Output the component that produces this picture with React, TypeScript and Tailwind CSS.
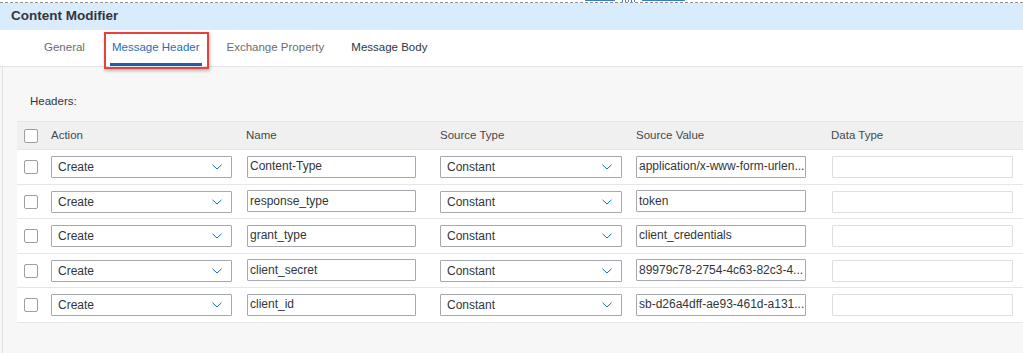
import React from "react";

const rows = [
  { name: "Content-Type", value: "application/x-www-form-urlen..." },
  { name: "response_type", value: "token" },
  { name: "grant_type", value: "client_credentials" },
  { name: "client_secret", value: "89979c78-2754-4c63-82c3-4..." },
  { name: "client_id", value: "sb-d26a4dff-ae93-461d-a131..." },
];

function Chevron() {
  return (
    <svg width="10" height="6" viewBox="0 0 10 6" className="shrink-0">
      <path d="M0.5 0.8 L5 5 L9.5 0.8" fill="none" stroke="#0a6ed1" strokeWidth="1" />
    </svg>
  );
}

function Checkbox() {
  return <div className="w-[14px] h-[14px] bg-white border border-[#9aa0a6] rounded-[2px]" />;
}

function Select({ text, w }: { text: string; w: string }) {
  return (
    <div className={`${w} h-[22px] bg-white border border-[#a3a9af] rounded-[1px] flex items-center justify-between pl-[6px] pr-[9px]`}>
      <span className="text-[12px] text-[#32363a] leading-none">{text}</span>
      <Chevron />
    </div>
  );
}

function Input({ text, w, light }: { text?: string; w: string; light?: boolean }) {
  return (
    <div
      className={`${w} h-[22px] bg-white border ${light ? "border-[#dcdfe2]" : "border-[#a3a9af]"} rounded-[1px] flex items-center pl-[2px] overflow-hidden`}
    >
      <span className="text-[12px] text-[#32363a] leading-none whitespace-nowrap -mt-[1px]">{text}</span>
    </div>
  );
}

export default function App() {
  return (
    <div
      className="w-[1023px] h-[353px] bg-[#f7f7f7] overflow-hidden relative flex flex-col"
      style={{ fontFamily: '"Liberation Sans", Arial, sans-serif' }}
    >
      {/* top strip with dashed line */}
      <div className="h-[3px] bg-white border-b border-dashed border-[#8f8f8f] relative shrink-0">
        <div className="absolute left-[585px] top-0 w-[30px] h-[1px] bg-[#3d7cc0]" />
        <div className="absolute left-[622px] top-0 w-[13px] h-[2px] flex gap-[2px]">
          <div className="w-[1px] h-full bg-[#3d7cc0]" />
          <div className="w-[1px] h-full bg-[#3d7cc0]" />
          <div className="w-[1px] h-full bg-[#3d7cc0]" />
          <div className="w-[1px] h-full bg-[#3d7cc0]" />
          <div className="w-[1px] h-full bg-[#3d7cc0]" />
        </div>
        <div className="absolute left-[642px] top-0 w-[43px] h-[1px] bg-[#3d7cc0]" />
      </div>

      {/* title bar */}
      <div className="h-[27px] bg-[#d9ecfd] flex items-center pl-[11px] shrink-0">
        <span className="text-[13.5px] font-bold text-[#32363a]">Content Modifier</span>
      </div>

      {/* tabs */}
      <div className="h-[37px] bg-white border-b border-[#e3e3e3] flex pl-[42px] gap-[23px] shrink-0 relative">
        <div className="px-[2px] flex items-center border-b-[3px] border-transparent pt-[3px] text-[11.5px] text-[#6a6d70]">General</div>
        <div className="px-[2px] flex items-center border-b-[3px] border-[#1d5fae] pt-[3px] text-[11.5px] text-[#2a6cb3]">Message Header</div>
        <div className="px-[2px] flex items-center border-b-[3px] border-transparent pt-[3px] text-[11.5px] text-[#6a6d70]">Exchange Property</div>
        <div className="px-[2px] flex items-center border-b-[3px] border-transparent pt-[3px] text-[11.5px] text-[#32363a]">Message Body</div>
        {/* red annotation box */}
        <div className="absolute left-[104px] top-[2px] w-[105px] h-[37px] border-2 border-[#e8403b] shadow-[1px_2px_3px_rgba(0,0,0,0.25)]" />
      </div>

      {/* content */}
      <div className="flex-1 ml-[2px] border-l border-[#e2e2e2] flex flex-col">
        <div className="pl-[27px] pt-[27px] h-[54px] text-[11.5px] text-[#32363a] leading-[14px]">Headers:</div>

        <div className="ml-[14px]">
          {/* header row */}
          <div className="h-[29px] bg-[#f0f0f0] border-t border-[#e6e6e6] border-b flex items-center text-[11.5px] text-[#45484b]">
            <div className="w-[27px] pl-[7px] flex items-center">
              <Checkbox />
            </div>
            <div className="w-[195px] pl-[7px]">Action</div>
            <div className="w-[195px] pl-[7px]">Name</div>
            <div className="w-[195px] pl-[6px]">Source Type</div>
            <div className="w-[195px] pl-[7px]">Source Value</div>
            <div className="pl-[7px]">Data Type</div>
          </div>

          {rows.map((r, i) => (
            <div
              key={r.name}
              className={`${i % 2 === 0 ? "h-[35px]" : "h-[34px]"} bg-white border-b border-[#e6e6e6] flex items-center`}
            >
              <div className="w-[27px] pl-[7px] flex items-center">
                <Checkbox />
              </div>
              <div className="w-[195px] pl-[7px]">
                <Select text="Create" w="w-[181px]" />
              </div>
              <div className="w-[195px] pl-[8px] -mt-[1px]">
                <Input text={r.name} w="w-[169px]" />
              </div>
              <div className="w-[195px] pl-[6px]">
                <Select text="Constant" w="w-[182px]" />
              </div>
              <div className="w-[195px] pl-[7px] -mt-[1px]">
                <Input text={r.value} w="w-[170px]" />
              </div>
              <div className="pl-[8px]">
                <Input w="w-[181px]" light />
              </div>
            </div>
          ))}
        </div>
      </div>
    </div>
  );
}
